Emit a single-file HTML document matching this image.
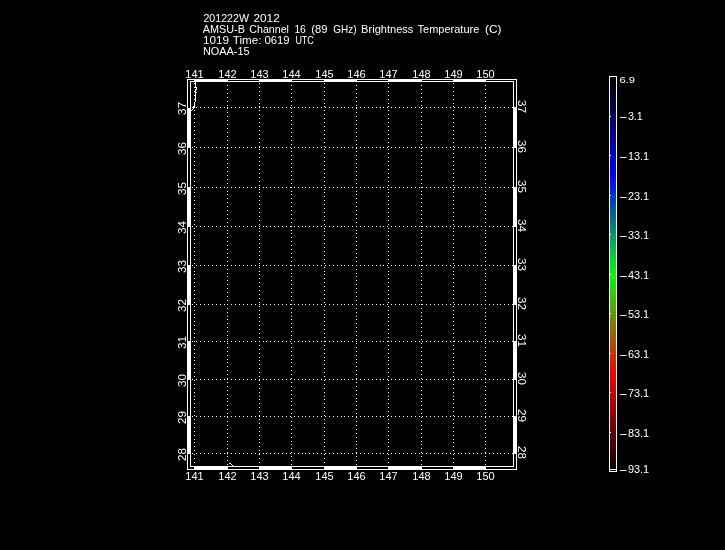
<!DOCTYPE html>
<html lang="en">
<head>
<meta charset="utf-8">
<title>AMSU-B Channel 16 (89 GHz) Brightness Temperature</title>
<style>
html,body{margin:0;padding:0;background:#000;}
body{width:725px;height:550px;overflow:hidden;}
svg{display:block;will-change:transform;}
text{font-family:"Liberation Sans",sans-serif;fill:#fff;}
.t{font-size:11px;}
.c{font-size:10px;}
.g{stroke:#fff;stroke-width:1;stroke-dasharray:1 2.907;fill:none;}
.h{stroke-dasharray:1 2.899;}
.k{fill:#000;}
.w{fill:#fff;}
.l{stroke:#fff;stroke-width:1;fill:none;}
</style>
</head>
<body>
<svg width="725" height="550" viewBox="0 0 725 550">
<rect class="k" x="0" y="0" width="725" height="550"/>
<g class="t">
<text y="22"><tspan x="203.44" textLength="45.58" lengthAdjust="spacingAndGlyphs">201222W</tspan> <tspan x="253.44" textLength="26.33" lengthAdjust="spacingAndGlyphs">2012</tspan></text>
<text y="33"><tspan x="202.71" textLength="42.19" lengthAdjust="spacingAndGlyphs">AMSU-B</tspan> <tspan x="249.32" textLength="39.64" lengthAdjust="spacingAndGlyphs">Channel</tspan> <tspan x="294.38" textLength="11.51" lengthAdjust="spacingAndGlyphs">16</tspan> <tspan x="311.25" textLength="16.20" lengthAdjust="spacingAndGlyphs">(89</tspan> <tspan x="333.36" textLength="23.27" lengthAdjust="spacingAndGlyphs">GHz)</tspan> <tspan x="361.14" textLength="52.23" lengthAdjust="spacingAndGlyphs">Brightness</tspan> <tspan x="417.56" textLength="61.77" lengthAdjust="spacingAndGlyphs">Temperature</tspan> <tspan x="485.03" textLength="16.36" lengthAdjust="spacingAndGlyphs">(C)</tspan></text>
<text y="44"><tspan x="202.92" textLength="26.16" lengthAdjust="spacingAndGlyphs">1019</tspan> <tspan x="232.77" textLength="28.64" lengthAdjust="spacingAndGlyphs">Time:</tspan> <tspan x="264.45" textLength="25.15" lengthAdjust="spacingAndGlyphs">0619</tspan> <tspan x="295.38" textLength="18.39" lengthAdjust="spacingAndGlyphs">UTC</tspan></text>
<text y="55"><tspan x="202.95" textLength="46.70" lengthAdjust="spacingAndGlyphs">NOAA-15</tspan></text>
</g>
<g shape-rendering="crispEdges">
<rect class="w" x="187" y="79" width="330" height="391"/>
<rect class="k" x="191" y="82" width="322" height="384"/>
<rect class="k" x="188" y="80" width="6" height="1"/>
<rect class="k" x="188" y="467" width="6" height="2"/>
<rect class="k" x="228" y="80" width="31" height="1"/>
<rect class="k" x="228" y="467" width="31" height="2"/>
<rect class="k" x="292" y="80" width="32" height="1"/>
<rect class="k" x="292" y="467" width="32" height="2"/>
<rect class="k" x="357" y="80" width="31" height="1"/>
<rect class="k" x="357" y="467" width="31" height="2"/>
<rect class="k" x="422" y="80" width="31" height="1"/>
<rect class="k" x="422" y="467" width="31" height="2"/>
<rect class="k" x="486" y="80" width="30" height="1"/>
<rect class="k" x="486" y="467" width="30" height="2"/>
<rect class="k" x="188" y="80" width="2" height="28"/>
<rect class="k" x="514" y="80" width="2" height="27"/>
<rect class="k" x="188" y="148" width="2" height="39"/>
<rect class="k" x="514" y="148" width="2" height="39"/>
<rect class="k" x="188" y="227" width="2" height="38"/>
<rect class="k" x="514" y="227" width="2" height="38"/>
<rect class="k" x="188" y="305" width="2" height="36"/>
<rect class="k" x="514" y="305" width="2" height="36"/>
<rect class="k" x="188" y="380" width="2" height="36"/>
<rect class="k" x="514" y="380" width="2" height="36"/>
<rect class="k" x="188" y="454" width="2" height="15"/>
<rect class="k" x="514" y="454" width="2" height="15"/>
<line class="g" x1="194.5" y1="463" x2="194.5" y2="82"/>
<line class="g" x1="227.5" y1="465" x2="227.5" y2="82"/>
<line class="g" x1="259.5" y1="463" x2="259.5" y2="82"/>
<line class="g" x1="291.5" y1="465" x2="291.5" y2="82"/>
<line class="g" x1="324.5" y1="463" x2="324.5" y2="82"/>
<line class="g" x1="356.5" y1="465" x2="356.5" y2="82"/>
<line class="g" x1="388.5" y1="463" x2="388.5" y2="82"/>
<line class="g" x1="421.5" y1="465" x2="421.5" y2="82"/>
<line class="g" x1="453.5" y1="463" x2="453.5" y2="82"/>
<line class="g" x1="485.5" y1="465" x2="485.5" y2="82"/>
<line class="g h" x1="192.4" y1="107.5" x2="513.2" y2="107.5"/>
<line class="g h" x1="192.4" y1="147.5" x2="513.2" y2="147.5"/>
<line class="g h" x1="192.4" y1="187.5" x2="513.2" y2="187.5"/>
<line class="g h" x1="192.4" y1="226.5" x2="513.2" y2="226.5"/>
<line class="g h" x1="192.4" y1="265.5" x2="513.2" y2="265.5"/>
<line class="g h" x1="192.4" y1="304.5" x2="513.2" y2="304.5"/>
<line class="g h" x1="192.4" y1="341.5" x2="513.2" y2="341.5"/>
<line class="g h" x1="192.4" y1="379.5" x2="513.2" y2="379.5"/>
<line class="g h" x1="192.4" y1="416.5" x2="513.2" y2="416.5"/>
<line class="g h" x1="192.4" y1="453.5" x2="513.2" y2="453.5"/>
<path class="w" d="M195 82h1v6h-1zM196 87h1v3h-1zM195 89h1v13h-1zM196 92h1v1h-1zM194 102h1v4h-1zM193 106h1v3h-1zM194 107h1v1h-1zM192 109h1v1h-1zM191 110h1v1h-1z"/>
<path class="w" d="M229 463h2v1h-2zM231 464h1v1h-1zM232 465h1v1h-1z"/>
</g>
<g class="t" text-anchor="middle">
<text x="194.5" y="78">141</text>
<text x="227.5" y="78">142</text>
<text x="259.5" y="78">143</text>
<text x="291.5" y="78">144</text>
<text x="324.5" y="78">145</text>
<text x="356.5" y="78">146</text>
<text x="388.5" y="78">147</text>
<text x="421.5" y="78">148</text>
<text x="453.5" y="78">149</text>
<text x="485.5" y="78">150</text>
<text x="194.5" y="480">141</text>
<text x="227.5" y="480">142</text>
<text x="259.5" y="480">143</text>
<text x="291.5" y="480">144</text>
<text x="324.5" y="480">145</text>
<text x="356.5" y="480">146</text>
<text x="388.5" y="480">147</text>
<text x="421.5" y="480">148</text>
<text x="453.5" y="480">149</text>
<text x="485.5" y="480">150</text>
<text transform="translate(186 108.5) rotate(-90)" textLength="13" lengthAdjust="spacingAndGlyphs">37</text>
<text transform="translate(186 148.5) rotate(-90)" textLength="13" lengthAdjust="spacingAndGlyphs">36</text>
<text transform="translate(186 188.5) rotate(-90)" textLength="13" lengthAdjust="spacingAndGlyphs">35</text>
<text transform="translate(186 227.5) rotate(-90)" textLength="13" lengthAdjust="spacingAndGlyphs">34</text>
<text transform="translate(186 266.5) rotate(-90)" textLength="13" lengthAdjust="spacingAndGlyphs">33</text>
<text transform="translate(186 305.5) rotate(-90)" textLength="13" lengthAdjust="spacingAndGlyphs">32</text>
<text transform="translate(186 342.5) rotate(-90)" textLength="13" lengthAdjust="spacingAndGlyphs">31</text>
<text transform="translate(186 380.5) rotate(-90)" textLength="13" lengthAdjust="spacingAndGlyphs">30</text>
<text transform="translate(186 417.5) rotate(-90)" textLength="13" lengthAdjust="spacingAndGlyphs">29</text>
<text transform="translate(186 454.5) rotate(-90)" textLength="13" lengthAdjust="spacingAndGlyphs">28</text>
<text transform="translate(518 106.5) rotate(90)" textLength="13" lengthAdjust="spacingAndGlyphs">37</text>
<text transform="translate(518 146.5) rotate(90)" textLength="13" lengthAdjust="spacingAndGlyphs">36</text>
<text transform="translate(518 186.5) rotate(90)" textLength="13" lengthAdjust="spacingAndGlyphs">35</text>
<text transform="translate(518 225.5) rotate(90)" textLength="13" lengthAdjust="spacingAndGlyphs">34</text>
<text transform="translate(518 264.5) rotate(90)" textLength="13" lengthAdjust="spacingAndGlyphs">33</text>
<text transform="translate(518 303.5) rotate(90)" textLength="13" lengthAdjust="spacingAndGlyphs">32</text>
<text transform="translate(518 340.5) rotate(90)" textLength="13" lengthAdjust="spacingAndGlyphs">31</text>
<text transform="translate(518 378.5) rotate(90)" textLength="13" lengthAdjust="spacingAndGlyphs">30</text>
<text transform="translate(518 415.5) rotate(90)" textLength="13" lengthAdjust="spacingAndGlyphs">29</text>
<text transform="translate(518 452.5) rotate(90)" textLength="13" lengthAdjust="spacingAndGlyphs">28</text>
</g>
<defs><linearGradient id="cb" x1="0" y1="0" x2="0" y2="1">
<stop offset="0" stop-color="#000"/><stop offset="0.25" stop-color="#00f"/><stop offset="0.5" stop-color="#0f0"/><stop offset="0.75" stop-color="#f00"/><stop offset="1" stop-color="#000"/>
</linearGradient></defs>
<g shape-rendering="crispEdges">
<rect class="w" x="609" y="76" width="8" height="396"/>
<rect x="610" y="77" width="6" height="394" fill="url(#cb)"/>
<rect class="w" x="610" y="469" width="6" height="1"/>
<rect class="k" x="610" y="470" width="6" height="1"/>
<rect class="w" x="610" y="116" width="1" height="1"/>
<rect class="w" x="610" y="155" width="1" height="1"/>
<rect class="w" x="610" y="195" width="1" height="1"/>
<rect class="w" x="610" y="234" width="1" height="1"/>
<rect class="w" x="610" y="274" width="1" height="1"/>
<rect class="w" x="610" y="313" width="1" height="1"/>
<rect class="w" x="610" y="353" width="1" height="1"/>
<rect class="w" x="610" y="392" width="1" height="1"/>
<rect class="w" x="610" y="432" width="1" height="1"/>
</g>
<g class="c">
<text transform="translate(619.5 83) scale(1 0.86)" textLength="15.6" lengthAdjust="spacingAndGlyphs">6.9</text>
<text y="120"><tspan x="618.9" textLength="9" lengthAdjust="spacingAndGlyphs">-</tspan><tspan x="627.9" textLength="14.93" lengthAdjust="spacingAndGlyphs">3.1</tspan></text>
<text y="160"><tspan x="618.9" textLength="9" lengthAdjust="spacingAndGlyphs">-</tspan><tspan x="627.9" textLength="21.18" lengthAdjust="spacingAndGlyphs">13.1</tspan></text>
<text y="199.5"><tspan x="618.9" textLength="9" lengthAdjust="spacingAndGlyphs">-</tspan><tspan x="627.9" textLength="21.18" lengthAdjust="spacingAndGlyphs">23.1</tspan></text>
<text y="239"><tspan x="618.9" textLength="9" lengthAdjust="spacingAndGlyphs">-</tspan><tspan x="627.9" textLength="21.18" lengthAdjust="spacingAndGlyphs">33.1</tspan></text>
<text y="279"><tspan x="618.9" textLength="9" lengthAdjust="spacingAndGlyphs">-</tspan><tspan x="627.9" textLength="21.18" lengthAdjust="spacingAndGlyphs">43.1</tspan></text>
<text y="318"><tspan x="618.9" textLength="9" lengthAdjust="spacingAndGlyphs">-</tspan><tspan x="627.9" textLength="21.18" lengthAdjust="spacingAndGlyphs">53.1</tspan></text>
<text y="357.5"><tspan x="618.9" textLength="9" lengthAdjust="spacingAndGlyphs">-</tspan><tspan x="627.9" textLength="21.18" lengthAdjust="spacingAndGlyphs">63.1</tspan></text>
<text y="397"><tspan x="618.9" textLength="9" lengthAdjust="spacingAndGlyphs">-</tspan><tspan x="627.9" textLength="21.18" lengthAdjust="spacingAndGlyphs">73.1</tspan></text>
<text y="437"><tspan x="618.9" textLength="9" lengthAdjust="spacingAndGlyphs">-</tspan><tspan x="627.9" textLength="21.18" lengthAdjust="spacingAndGlyphs">83.1</tspan></text>
<text y="473"><tspan x="618.9" textLength="9" lengthAdjust="spacingAndGlyphs">-</tspan><tspan x="627.9" textLength="21.18" lengthAdjust="spacingAndGlyphs">93.1</tspan></text>
</g>
</svg>
</body>
</html>
